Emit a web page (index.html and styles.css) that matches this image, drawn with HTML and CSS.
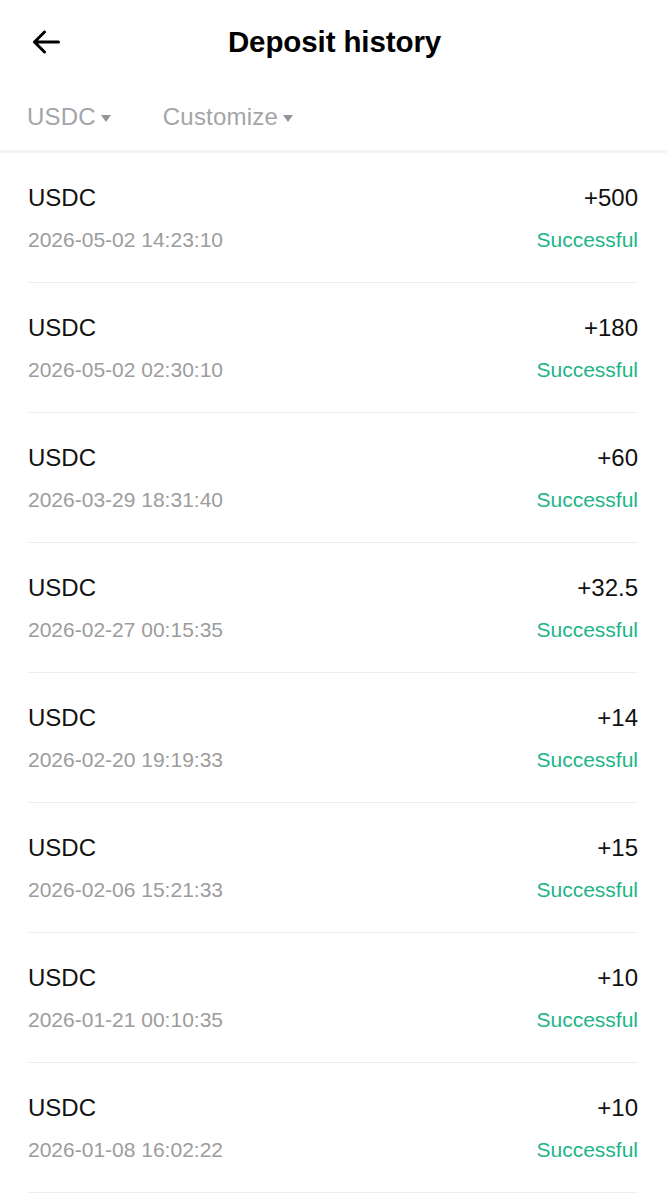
FILE: index.html
```html
<!DOCTYPE html>
<html>
<head>
    <meta charset="utf-8" />
    <meta name="viewport" content="width=device-width, initial-scale=1" />
    <title>Deposit history</title>
    <link rel="stylesheet" href="styles.css">
</head>
<body>
<div class="topBar">
    <a class="backBtn" href="#">
        <svg width="28" height="24" viewBox="0 0 28 24" fill="none" stroke="#000" stroke-width="3" stroke-linecap="round" stroke-linejoin="round">
            <path d="M2.5 12H26.5M12.5 2L2.5 12L12.5 22" />
        </svg>
    </a>
    <h1 class="pageTitle">Deposit history</h1>
</div>
<div class="filterBar">
    <span class="filter">USDC <i class="caret"></i></span>
    <span class="filter">Customize <i class="caret"></i></span>
</div>
<div class="list">
    <div class="row">
        <div class="rowTop"><span class="coin">USDC</span><span class="amount">+500</span></div>
        <div class="rowBottom"><span class="date">2026-05-02 14:23:10</span><span class="status">Successful</span></div>
    </div>
    <div class="row">
        <div class="rowTop"><span class="coin">USDC</span><span class="amount">+180</span></div>
        <div class="rowBottom"><span class="date">2026-05-02 02:30:10</span><span class="status">Successful</span></div>
    </div>
    <div class="row">
        <div class="rowTop"><span class="coin">USDC</span><span class="amount">+60</span></div>
        <div class="rowBottom"><span class="date">2026-03-29 18:31:40</span><span class="status">Successful</span></div>
    </div>
    <div class="row">
        <div class="rowTop"><span class="coin">USDC</span><span class="amount">+32.5</span></div>
        <div class="rowBottom"><span class="date">2026-02-27 00:15:35</span><span class="status">Successful</span></div>
    </div>
    <div class="row">
        <div class="rowTop"><span class="coin">USDC</span><span class="amount">+14</span></div>
        <div class="rowBottom"><span class="date">2026-02-20 19:19:33</span><span class="status">Successful</span></div>
    </div>
    <div class="row">
        <div class="rowTop"><span class="coin">USDC</span><span class="amount">+15</span></div>
        <div class="rowBottom"><span class="date">2026-02-06 15:21:33</span><span class="status">Successful</span></div>
    </div>
    <div class="row">
        <div class="rowTop"><span class="coin">USDC</span><span class="amount">+10</span></div>
        <div class="rowBottom"><span class="date">2026-01-21 00:10:35</span><span class="status">Successful</span></div>
    </div>
    <div class="row">
        <div class="rowTop"><span class="coin">USDC</span><span class="amount">+10</span></div>
        <div class="rowBottom"><span class="date">2026-01-08 16:02:22</span><span class="status">Successful</span></div>
    </div>
</div>
</body>
</html>
```

FILE: styles.css
```css
body {
    margin: 0;
    background: #fff;
    font-family: "Liberation Sans", Arial, sans-serif;
    color: #000;
}
.topBar {
    position: relative;
    height: 84px;
    display: flex;
    align-items: center;
    justify-content: center;
}
.backBtn {
    position: absolute;
    left: 32px;
    top: 30px;
    width: 28px;
    height: 24px;
    display: block;
}
.backBtn svg { display: block; }
.pageTitle {
    margin: 0;
    padding-left: 2px;
    font-size: 29.5px;
    font-weight: bold;
    letter-spacing: -0.1px;
}
.filterBar {
    height: 66px;
    display: flex;
    align-items: center;
    gap: 52px;
    padding: 0 27px;
    border-bottom: 3px solid #f4f4f4;
}
.filter {
    font-size: 24px;
    letter-spacing: 0.2px;
    color: #a3a5a8;
    display: flex;
    align-items: center;
}
.caret {
    display: inline-block;
    margin-left: 5px;
    margin-top: 2px;
    width: 0;
    height: 0;
    border-left: 5px solid transparent;
    border-right: 5px solid transparent;
    border-top: 7px solid #939598;
}
.list {
    padding: 0 29px 0 28px;
}
.row {
    padding: 30px 0 29px;
    border-bottom: 1px solid #eeeeee;
}
.rowTop, .rowBottom {
    display: flex;
    justify-content: space-between;
    align-items: center;
}
.rowTop {
    height: 30px;
    font-size: 24px;
    color: #111;
}
.rowBottom {
    height: 26px;
    margin-top: 14px;
    font-size: 21px;
}
.date { color: #9c9c9c; }
.status { color: #1db587; }
```
